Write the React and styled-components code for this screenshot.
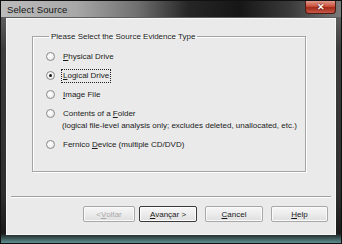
import React from 'react';
import styled, { createGlobalStyle } from 'styled-components';

const Global = createGlobalStyle`
  html, body {
    margin: 0;
    padding: 0;
    background: #1c1c1c;
  }
  * {
    box-sizing: border-box;
  }
`;

const Window = styled.div`
  width: 342px;
  height: 244px;
  display: flex;
  flex-direction: column;
  background: linear-gradient(180deg, #6e6e6e 0%, #3c3c3c 20%, #2e2e2e 80%, #1a1a1a 96%, #5d8f91 100%);
  border: 1px solid #111;
  font-family: 'Liberation Sans', Arial, sans-serif;
  overflow: hidden;
`;

const TitleBar = styled.div`
  height: 16px;
  display: flex;
  align-items: center;
  padding-left: 6px;
  background: linear-gradient(90deg, #bcbcbc 0%, #a8a8a8 22%, #707070 40%, #262626 55%, #161616 70%, #3a3a3a 85%, #7a7a7a 100%);
`;

const Title = styled.span`
  font-size: 9.5px;
  color: #141414;
  letter-spacing: 0.1px;
`;

const CloseButton = styled.div`
  margin-left: auto;
  margin-right: 5px;
  align-self: flex-start;
  width: 31px;
  height: 13px;
  border: 1px solid #4a1a14;
  border-top: none;
  border-radius: 0 0 4px 4px;
  background: linear-gradient(180deg, #e09a8c 0%, #c9503c 45%, #a22a18 55%, #c8584a 100%);
  color: #fff;
  font-size: 9px;
  font-weight: bold;
  display: flex;
  align-items: center;
  justify-content: center;
  line-height: 1;
  text-shadow: 0 0 2px #300;
`;

const Client = styled.div`
  flex: 1;
  margin: 1px 5px 8px 5px;
  background: #eaeaea;
  border: 1px solid #f8f8f8;
  display: flex;
  flex-direction: column;
  padding: 0 4px;
`;

const GroupBox = styled.fieldset`
  margin: 13px 0 0 21px;
  width: 274px;
  height: 140px;
  padding: 4px 0 0 13px;
  border: 1px solid #a4a4a4;
  box-shadow: inset 1px 1px 0 #fff, 1px 1px 0 #fff;
  display: flex;
  flex-direction: column;
`;

const Legend = styled.legend`
  font-size: 8px;
  color: #222;
  padding: 0 2px;
  margin-left: 3px;
`;

const Options = styled.div`
  display: flex;
  flex-direction: column;
  gap: 7px;
  margin-top: 6px;
`;

const Option = styled.div`
  display: flex;
  align-items: flex-start;
  gap: 7px;
  font-size: 8px;
  color: #1a1a1a;
  line-height: 12px;
`;

const Radio = styled.span`
  flex: none;
  width: 9px;
  height: 9px;
  margin-top: 1px;
  border-radius: 50%;
  border: 1px solid #8a8a8a;
  background: radial-gradient(circle at 40% 40%, #ffffff 0%, #f0f0f0 55%, #d8d8d8 100%);
  display: flex;
  align-items: center;
  justify-content: center;
  &::after {
    content: '';
    width: 3px;
    height: 3px;
    border-radius: 50%;
    background: ${({ $checked }) => ($checked ? '#1a1a1a' : 'transparent')};
  }
`;

const OptionText = styled.span`
  display: flex;
  flex-direction: column;
`;

const Label = styled.span`
  padding: 0 1px;
  outline: ${({ $focused }) => ($focused ? '1px dotted #222' : 'none')};
  align-self: flex-start;
`;

const Key = styled.u`
  text-decoration: underline;
`;

const Separator = styled.div`
  margin-top: 24px;
  height: 2px;
  border-top: 1px solid #a0a0a0;
  border-bottom: 1px solid #fff;
`;

const ButtonRow = styled.div`
  display: flex;
  justify-content: flex-end;
  margin-top: 8px;
  gap: 8px;
  padding-right: 3px;
`;

const ButtonPair = styled.div`
  display: flex;
  gap: 4px;
`;

const Button = styled.div`
  width: ${({ $w }) => $w || 57}px;
  height: 16px;
  display: flex;
  align-items: center;
  justify-content: center;
  font-size: 8px;
  color: ${({ $disabled }) => ($disabled ? '#a8a8a8' : '#1a1a1a')};
  background: linear-gradient(180deg, #f6f6f6 0%, #ececec 50%, #dedede 100%);
  border: 1px solid ${({ $default }) => ($default ? '#3a3a3a' : '#a8a8a8')};
  box-shadow: ${({ $default }) => ($default ? 'inset 0 0 0 1px #fff' : 'inset 0 0 0 1px #fafafa')};
  border-radius: 2px;
`;

const options = [
  { key: 'P', rest: 'hysical Drive' },
  { key: 'L', rest: 'ogical Drive', checked: true },
  { key: 'I', rest: 'mage File' },
  { pre: 'Contents of a ', key: 'F', rest: 'older', note: '(logical file-level analysis only; excludes deleted, unallocated, etc.)' },
  { pre: 'Fernico ', key: 'D', rest: 'evice (multiple CD/DVD)' },
];

export default function App() {
  return (
    <>
      <Global />
      <Window>
        <TitleBar>
          <Title>Select Source</Title>
          <CloseButton>✕</CloseButton>
        </TitleBar>
        <Client>
          <GroupBox>
            <Legend>Please Select the Source Evidence Type</Legend>
            <Options>
              {options.map((o) => (
                <Option key={o.rest}>
                  <Radio $checked={o.checked} />
                  <OptionText>
                    <Label $focused={o.checked}>
                      {o.pre}
                      <Key>{o.key}</Key>
                      {o.rest}
                    </Label>
                    {o.note && <span>{o.note}</span>}
                  </OptionText>
                </Option>
              ))}
            </Options>
          </GroupBox>
          <Separator />
          <ButtonRow>
            <ButtonPair>
              <Button $w={52} $disabled>
                &lt; <Key>V</Key>oltar
              </Button>
              <Button $w={58} $default>
                <Key>A</Key>vançar &gt;
              </Button>
            </ButtonPair>
            <Button $w={58}>
              <Key>C</Key>ancel
            </Button>
            <Button $w={57}>
              <Key>H</Key>elp
            </Button>
          </ButtonRow>
        </Client>
      </Window>
    </>
  );
}
